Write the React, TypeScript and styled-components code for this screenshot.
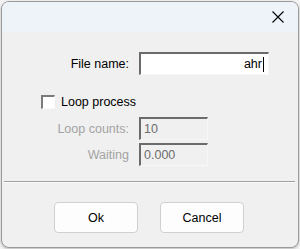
import styled, { createGlobalStyle } from 'styled-components';

const GlobalStyle = createGlobalStyle`
  html, body {
    margin: 0;
    padding: 0;
    background: #f4f4f4;
  }
  body {
    font-family: 'Liberation Sans', Arial, sans-serif;
    font-size: 12.5px;
  }
`;

const Page = styled.div`
  width: 300px;
  height: 249px;
  padding: 1px 2px 1px 1px;
  box-sizing: border-box;
`;

const Window = styled.div`
  width: 298px;
  height: 247px;
  box-sizing: border-box;
  border: 1px solid #9a9a9a;
  border-radius: 8px;
  background: #f0f0f0;
  overflow: hidden;
  display: flex;
  flex-direction: column;
  box-shadow: 0 1px 3px rgba(0, 0, 0, 0.25);
`;

const TitleBar = styled.div`
  height: 30px;
  background: #eef2f9;
  display: flex;
  justify-content: flex-end;
  align-items: center;
  padding-right: 8px;
`;

const CloseButton = styled.div`
  width: 24px;
  height: 30px;
  display: flex;
  align-items: center;
  justify-content: center;
`;

const Content = styled.div`
  padding-top: 20px;
  display: flex;
  flex-direction: column;
`;

const FieldRow = styled.div<{ $top: number }>`
  display: grid;
  grid-template-columns: 127px auto;
  column-gap: 10px;
  align-items: center;
  margin-top: ${(p) => p.$top}px;
`;

const Label = styled.span<{ $disabled?: boolean }>`
  text-align: right;
  color: ${(p) => (p.$disabled ? '#a3a3a3' : '#000')};
  white-space: nowrap;
`;

const TextBox = styled.div<{ $width: number; $disabled?: boolean }>`
  width: ${(p) => p.$width}px;
  height: 23px;
  box-sizing: border-box;
  border-style: solid;
  border-width: 2px 1px 1px 2px;
  border-color: #6b6b6b #f7f7f7 #f7f7f7 #6b6b6b;
  background: ${(p) => (p.$disabled ? '#f0f0f0' : '#fff')};
  color: ${(p) => (p.$disabled ? '#6d6d6d' : '#000')};
  display: flex;
  align-items: center;
  justify-content: ${(p) => (p.$disabled ? 'flex-start' : 'flex-end')};
  padding: 0 4px 0 3px;
  font-size: 12.5px;
`;

const Caret = styled.span`
  width: 1px;
  height: 15px;
  background: #000;
  margin-left: 1px;
`;

const CheckRow = styled.label`
  display: flex;
  align-items: center;
  gap: 6px;
  margin: 20px 0 0 39px;
  height: 14px;
`;

const CheckBox = styled.span`
  width: 14px;
  height: 14px;
  box-sizing: border-box;
  background: #fff;
  border-style: solid;
  border-width: 2px 1px 1px 2px;
  border-color: #7a7a7a #fafafa #fafafa #7a7a7a;
`;

const Separator = styled.div`
  margin: 15px 3px 0 2px;
  height: 1px;
  background: #a0a0a0;
  border-bottom: 1px solid #fcfcfc;
`;

const ButtonRow = styled.div`
  display: flex;
  justify-content: center;
  gap: 22px;
  margin: 19px 2px 0 0;
`;

const Button = styled.button`
  width: 84px;
  height: 31px;
  box-sizing: border-box;
  background: #fdfdfd;
  border: 1px solid #d0d0d0;
  border-radius: 4px;
  font-family: 'Liberation Sans', Arial, sans-serif;
  font-size: 12.5px;
  color: #000;
  padding: 0;
`;

export default function App() {
  return (
    <>
      <GlobalStyle />
      <Page>
        <Window>
          <TitleBar>
            <CloseButton>
              <svg width="12" height="12" viewBox="0 0 12 12">
                <path d="M0.5 0.5 L11.5 11.5 M11.5 0.5 L0.5 11.5" stroke="#000" strokeWidth="1.1" />
              </svg>
            </CloseButton>
          </TitleBar>
          <Content>
            <FieldRow $top={0}>
              <Label>File name:</Label>
              <TextBox $width={130}>
                ahr
                <Caret />
              </TextBox>
            </FieldRow>
            <CheckRow>
              <CheckBox />
              <span>Loop process</span>
            </CheckRow>
            <FieldRow $top={8}>
              <Label $disabled>Loop counts:</Label>
              <TextBox $width={69} $disabled>10</TextBox>
            </FieldRow>
            <FieldRow $top={3}>
              <Label $disabled>Waiting</Label>
              <TextBox $width={69} $disabled>0.000</TextBox>
            </FieldRow>
            <Separator />
            <ButtonRow>
              <Button>Ok</Button>
              <Button>Cancel</Button>
            </ButtonRow>
          </Content>
        </Window>
      </Page>
    </>
  );
}
